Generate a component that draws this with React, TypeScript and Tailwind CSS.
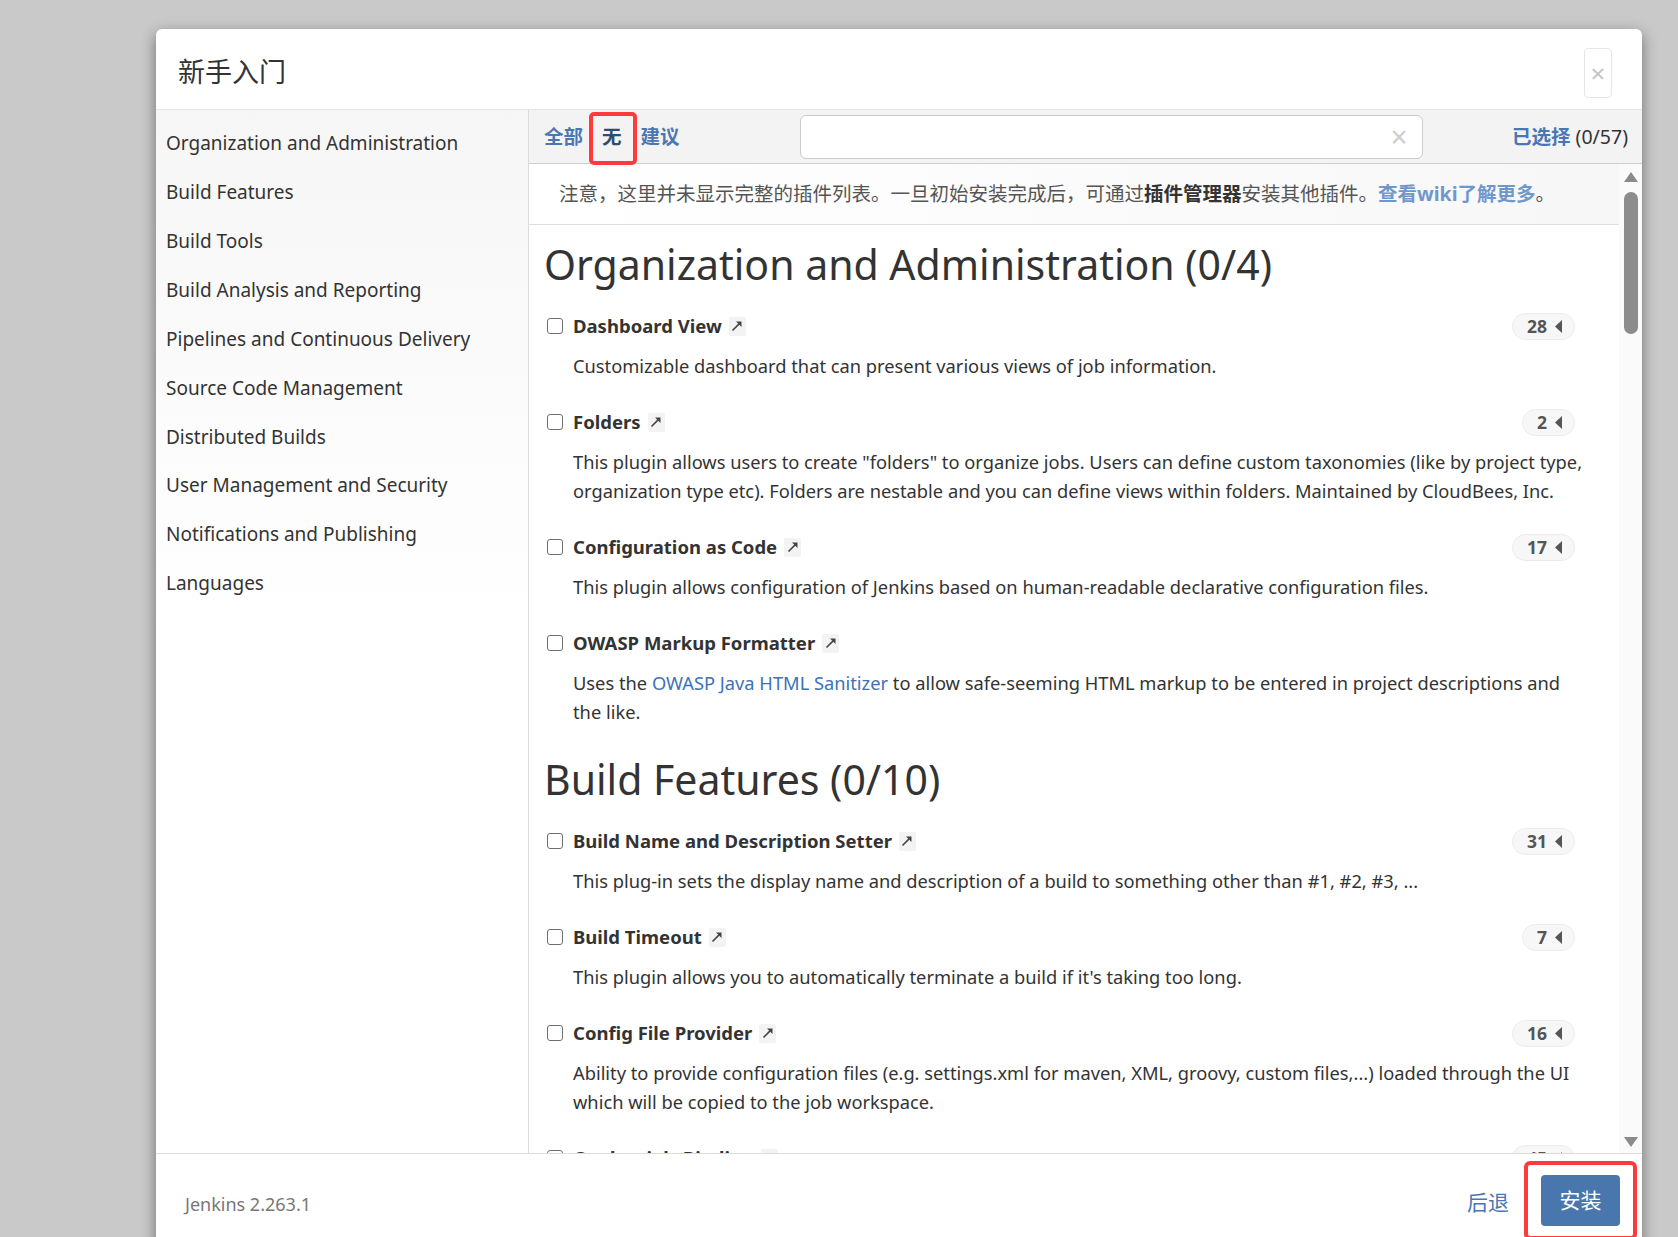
import React from "react";

interface Plugin {
  name: string;
  desc: React.ReactNode;
  count?: number;
}

interface Section {
  title: string;
  plugins: Plugin[];
}

const categories = [
  "Organization and Administration",
  "Build Features",
  "Build Tools",
  "Build Analysis and Reporting",
  "Pipelines and Continuous Delivery",
  "Source Code Management",
  "Distributed Builds",
  "User Management and Security",
  "Notifications and Publishing",
  "Languages",
];

const sections: Section[] = [
  {
    title: "Organization and Administration (0/4)",
    plugins: [
      {
        name: "Dashboard View",
        count: 28,
        desc: "Customizable dashboard that can present various views of job information.",
      },
      {
        name: "Folders",
        count: 2,
        desc: 'This plugin allows users to create "folders" to organize jobs. Users can define custom taxonomies (like by project type, organization type etc). Folders are nestable and you can define views within folders. Maintained by CloudBees, Inc.',
      },
      {
        name: "Configuration as Code",
        count: 17,
        desc: "This plugin allows configuration of Jenkins based on human-readable declarative configuration files.",
      },
      {
        name: "OWASP Markup Formatter",
        desc: (
          <>
            Uses the <span className="text-[#3d72b8]">OWASP Java HTML Sanitizer</span> to allow
            safe-seeming HTML markup to be entered in project descriptions and the like.
          </>
        ),
      },
    ],
  },
  {
    title: "Build Features (0/10)",
    plugins: [
      {
        name: "Build Name and Description Setter",
        count: 31,
        desc: "This plug-in sets the display name and description of a build to something other than #1, #2, #3, ...",
      },
      {
        name: "Build Timeout",
        count: 7,
        desc: "This plugin allows you to automatically terminate a build if it's taking too long.",
      },
      {
        name: "Config File Provider",
        count: 16,
        desc: "Ability to provide configuration files (e.g. settings.xml for maven, XML, groovy, custom files,...) loaded through the UI which will be copied to the job workspace.",
      },
      {
        name: "Credentials Binding",
        count: 45,
        desc: "Allows credentials to be bound to environment variables for use from miscellaneous build steps.",
      },
    ],
  },
];

const ExternalIcon = () => (
  <span className="ml-[7px] inline-flex h-[19px] w-[17px] items-center justify-center rounded-[2px] bg-[#f3f3f3]">
    <svg width="12" height="12" viewBox="0 0 12 12">
      <path d="M1.5 10.5 L8.6 3.4" stroke="#444" strokeWidth="1.6" />
      <path d="M5 1.5 L10.5 1.5 L10.5 7 Z" fill="#444" />
    </svg>
  </span>
);

const PluginRow: React.FC<{ plugin: Plugin }> = ({ plugin }) => (
  <div className="mb-[27px]">
    <div className="flex h-[30px] items-center">
      <div className="ml-[3px] h-[16px] w-[16px] rounded-[3px] border-[1.5px] border-[#6f6f6f] bg-white" />
      <span className="ml-[10px] text-[18.5px] font-bold text-[#333]">{plugin.name}</span>
      <ExternalIcon />
      {plugin.count !== undefined && (
        <span className="ml-auto mr-[12px] flex h-[27px] items-center gap-[8px] rounded-full border border-[#ebebeb] bg-[#f7f7f7] pl-[14px] pr-[12px] text-[17.5px] font-bold text-[#555]">
          {plugin.count}
          <svg width="7" height="13" viewBox="0 0 7 13">
            <path d="M7 0 L7 13 L0 6.5 Z" fill="#555" />
          </svg>
        </span>
      )}
    </div>
    <p className="mt-[10px] pl-[29px] text-[18.3px] leading-[29px] text-[#333]">{plugin.desc}</p>
  </div>
);

export default function App() {
  return (
    <div className="h-[1237px] w-[1678px] overflow-hidden bg-[#c9c9c9] pl-[156px] pt-[29px] font-['Noto_Sans','Noto_Sans_CJK_SC',sans-serif]">
      <div className="flex w-[1486px] flex-col rounded-t-[6px] bg-white shadow-[0_5px_15px_rgba(0,0,0,0.45)]">
        {/* header */}
        <div className="flex h-[81px] items-center justify-between border-b border-[#e5e5e5] pl-[22px] pr-[30px]">
          <h4 className="pt-[7px] text-[27px] font-normal text-[#333]">新手入门</h4>
          <button className="mt-[8px] flex h-[50px] w-[28px] items-center justify-center rounded-[4px] border border-[#e6e6e6] text-[26px] leading-none text-[#c4c4c4]">
            ×
          </button>
        </div>

        {/* body */}
        <div className="flex h-[1043px]">
          <div className="w-[373px] shrink-0 border-r border-[#dcdcdc] bg-linear-to-b from-[#f6f6f6] via-white to-white pt-[9px]">
            {categories.map((c) => (
              <div key={c} className="flex h-[48.9px] items-center pl-[10px] text-[19px] text-[#333]">
                {c}
              </div>
            ))}
          </div>

          <div className="flex min-w-0 flex-1 flex-col">
            {/* toolbar */}
            <div className="flex h-[54px] shrink-0 items-center border-b border-[#cfcfcf] bg-[#f3f3f3] pl-[15px] pr-[14px]">
              <div className="flex items-center text-[19.5px] font-bold">
                <span className="text-[#4a77b4]">全部</span>
                <span className="relative ml-[19px] text-[#2d4c72]">
                  无
                  <span className="absolute left-[-13px] top-[-10px] h-[53px] w-[48px] rounded-[5px] border-[4px] border-[#ff3a3a]" />
                </span>
                <span className="ml-[19px] text-[#4a77b4]">建议</span>
              </div>
              <div className="ml-[120px] flex h-[44px] w-[623px] items-center justify-end rounded-[6px] border border-[#cccccc] bg-white pr-[14px]">
                <span className="text-[30px] leading-none text-[#cfcfcf]">×</span>
              </div>
              <div className="ml-auto text-[19.5px] text-[#333]">
                <span className="font-bold text-[#4a77b4]">已选择</span> (0/57)
              </div>
            </div>

            {/* scroll area */}
            <div className="flex min-h-0 flex-1">
              <div className="min-w-0 flex-1 overflow-hidden">
                <div className="flex h-[61px] items-center border-b border-[#dedede] bg-linear-to-r from-white to-[#f7f7f7] pl-[30px] text-[19.5px] text-[#555]">
                  注意，这里并未显示完整的插件列表。一旦初始安装完成后，可通过
                  <b className="text-[#333]">插件管理器</b>
                  安装其他插件。
                  <b className="text-[#6f97cc]">查看wiki了解更多</b>。
                </div>
                <div className="pl-[15px] pr-[32px] pt-[13px]">
                  {sections.map((s) => (
                    <div key={s.title}>
                      <h1 className="mb-[21px] text-[41px] font-normal leading-[52px] text-[#333]">{s.title}</h1>
                      {s.plugins.map((p) => (
                        <PluginRow key={p.name} plugin={p} />
                      ))}
                    </div>
                  ))}
                </div>
              </div>
              {/* scrollbar */}
              <div className="relative flex w-[23px] shrink-0 flex-col items-center bg-[#fafafa]">
                <svg className="mt-[8px]" width="14" height="10" viewBox="0 0 14 10">
                  <path d="M7 0 L14 10 L0 10 Z" fill="#8a8a8a" />
                </svg>
                <div className="mt-[10px] h-[142px] w-[14px] rounded-full bg-[#8c8c8c]" />
                <svg className="mt-auto mb-[6px]" width="14" height="10" viewBox="0 0 14 10">
                  <path d="M0 0 L14 0 L7 10 Z" fill="#8a8a8a" />
                </svg>
              </div>
            </div>
          </div>
        </div>

        {/* footer */}
        <div className="flex h-[120px] items-start border-t border-[#dcdcdc] pt-[36px]">
          <span className="ml-[29px] mt-[1px] text-[18px] text-[#777]">Jenkins 2.263.1</span>
          <span className="ml-auto mt-[-3px] text-[21px] text-[#4a77b4]">后退</span>
          <div className="ml-[15px] mr-[5px] mt-[-29px] rounded-[6px] border-[4px] border-[#ff3a3a] px-[13px] py-[10px]">
            <button className="flex h-[51px] w-[79px] items-center justify-center rounded-[4px] bg-[#4a76ae] text-[21px] text-white">
              安装
            </button>
          </div>
        </div>
      </div>
    </div>
  );
}
